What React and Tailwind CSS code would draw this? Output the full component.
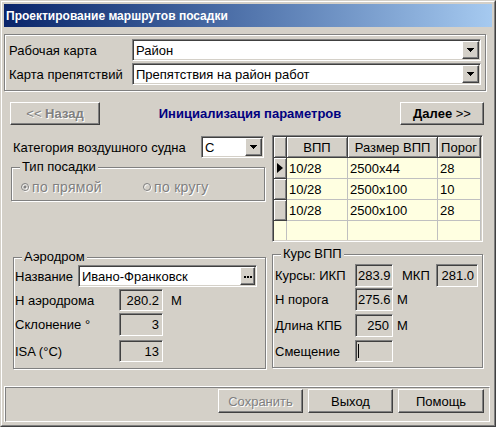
import React from "react";

const raised =
  "bg-[#d4d0c8] border border-t-white border-l-white border-b-[#404040] border-r-[#404040] shadow-[inset_-1px_-1px_0_#808080]";
const sunken =
  "border border-t-[#808080] border-l-[#808080] border-b-white border-r-white shadow-[inset_1px_1px_0_#404040,inset_-1px_-1px_0_#d4d0c8]";
const etched = "border border-[#808080] shadow-[inset_1px_1px_0_#fff,1px_1px_0_#fff]";
const dis = "text-[#808080] [text-shadow:1px_1px_0_#fff]";

function Arrow() {
  return (
    <svg width="7" height="4" viewBox="0 0 7 4" className="block">
      <path d="M0 0h7v1H0zM1 1h5v1H1zM2 2h3v1H2zM3 3h1v1H3z" fill="#000" />
    </svg>
  );
}

function Combo({ text, className }) {
  return (
    <div className={`flex items-stretch bg-white p-[1px] ${sunken} ${className}`}>
      <span className="flex-1 flex items-center pl-[2px] text-[13px] leading-none text-black">{text}</span>
      <div className={`w-[17px] flex items-center justify-center ${raised}`}>
        <Arrow />
      </div>
    </div>
  );
}

function Group({ title, className, children }) {
  return (
    <div className={`relative ${etched} ${className}`}>
      <span className="absolute left-[8px] top-[-9px] bg-[#d4d0c8] px-[2px] text-[13px] leading-[16px]">{title}</span>
      {children}
    </div>
  );
}

function Val({ children, className, align = "right" }) {
  return (
    <div
      className={`flex items-center p-[1px] bg-[#d4d0c8] ${sunken} ${
        align === "right" ? "justify-end pr-[3px]" : "justify-start pl-[2px]"
      } ${className}`}
    >
      <span className="text-[13px] leading-none">{children}</span>
    </div>
  );
}

function Radio({ checked }) {
  return (
    <svg width="9" height="9" viewBox="0 0 9 9" className="block">
      <circle cx="5" cy="5" r="3.5" fill="none" stroke="#fff" strokeWidth="1" />
      <circle cx="4" cy="4" r="3.5" fill="none" stroke="#808080" strokeWidth="1" />
      {checked && <circle cx="5" cy="5" r="1.5" fill="#fff" />}
      {checked && <circle cx="4" cy="4" r="1.5" fill="#808080" />}
    </svg>
  );
}

const hdr =
  "bg-[#d4d0c8] border-r border-b border-[#404040] shadow-[inset_1px_1px_0_#fff,inset_-1px_-1px_0_#808080]";
const cell = "border-r border-b border-[#c0c0c0] flex items-center pl-[2px] text-[13px] leading-none";

const rows = [
  ["10/28", "2500x44", "28"],
  ["10/28", "2500x100", "10"],
  ["10/28", "2500x100", "28"],
];

function Grid() {
  return (
    <div className={`mt-[10px] h-[107px] p-[1px] bg-[#ffffe1] flex flex-col overflow-hidden ${sunken}`}>
      <div className="h-[21px] flex shrink-0">
        <div className={`w-[13px] ${hdr}`} />
        <div className={`w-[61px] flex items-center justify-center text-[13px] leading-none ${hdr}`}>ВПП</div>
        <div className={`w-[90px] flex items-center justify-center text-[13px] leading-none ${hdr}`}>Размер ВПП</div>
        <div className={`flex-1 flex items-center justify-center text-[13px] leading-none ${hdr}`}>Порог</div>
      </div>
      {rows.map((r, i) => (
        <div key={i} className="h-[21px] flex shrink-0">
          <div className={`w-[13px] flex items-center pl-[3px] ${hdr}`}>
            {i === 0 && (
              <svg width="6" height="10" viewBox="0 0 6 10" className="block">
                <polygon points="0,0 6,5 0,10" fill="#000" />
              </svg>
            )}
          </div>
          <div className={`w-[61px] ${cell}`}>{r[0]}</div>
          <div className={`w-[90px] ${cell}`}>{r[1]}</div>
          <div className={`flex-1 ${cell}`}>{r[2]}</div>
        </div>
      ))}
      <div className="flex-1 flex">
        <div className="w-[13px] border-r border-[#c0c0c0]" />
        <div className="w-[61px] border-r border-[#c0c0c0]" />
        <div className="w-[90px] border-r border-[#c0c0c0]" />
        <div className="flex-1 border-r border-[#c0c0c0]" />
      </div>
    </div>
  );
}

export default function App() {
  return (
    <div className="w-[496px] h-[427px] border border-t-[#d4d0c8] border-l-[#d4d0c8] border-b-[#404040] border-r-[#404040] [font-family:'Liberation_Sans',Arial,sans-serif] text-black">
      <div className="w-full h-full border border-t-white border-l-white border-b-[#808080] border-r-[#808080] bg-[#d4d0c8] p-[2px] flex flex-col">
        {/* Title bar */}
        <div className="h-[23px] shrink-0 flex items-center pl-[2px] bg-linear-to-r from-[#0a246a] to-[#a6caf0] text-white font-bold text-[12px] leading-none">
          Проектирование маршрутов посадки
        </div>

        {/* Top group */}
        <div className={`mt-[7px] w-[482px] h-[57px] shrink-0 pt-[4px] pl-[4px] flex flex-col gap-[2px] ${etched}`}>
          <div className="h-[22px] flex items-center">
            <span className="w-[123px] text-[13px] leading-none">Рабочая карта</span>
            <Combo text="Район" className="w-[349px] h-[22px]" />
          </div>
          <div className="h-[22px] flex items-center">
            <span className="w-[123px] text-[13px] leading-none">Карта препятствий</span>
            <Combo text="Препятствия на район работ" className="w-[349px] h-[22px]" />
          </div>
        </div>

        {/* Nav row */}
        <div className="mt-[11px] h-[23px] shrink-0 flex items-center">
          <div className={`ml-[6px] w-[90px] h-[23px] flex items-center justify-center text-[13px] leading-none ${raised} ${dis}`}>
            <span>&lt;&lt;&nbsp;</span>
            <span className="font-bold">Назад</span>
          </div>
          <div className="flex-1 text-center font-bold text-[13px] leading-none text-[#000080]">Инициализация параметров</div>
          <div className={`mr-[8px] w-[84px] h-[23px] flex items-center justify-center text-[13px] leading-none ${raised}`}>
            <span className="font-bold">Далее</span>
            <span>&nbsp;&gt;&gt;</span>
          </div>
        </div>

        {/* Middle */}
        <div className="flex-1 flex">
          {/* Left column */}
          <div className="w-[262px] flex flex-col">
            <div className="mt-[11px] h-[22px] flex items-center">
              <span className="pl-[9px] text-[13px] leading-none">Категория воздушного судна</span>
              <Combo text="С" className="ml-auto mr-[2px] w-[63px] h-[22px]" />
            </div>
            <Group title="Тип посадки" className="mt-[9px] ml-[7px] w-[254px] h-[34px]">
              <div className="pt-[12px] pl-[9px] flex items-center">
                <div className={`w-[122px] flex items-center gap-[2px] text-[14px] tracking-[0.3px] leading-none ${dis}`}>
                  <Radio checked />
                  <span>по прямой</span>
                </div>
                <div className={`flex items-center gap-[2px] text-[14px] tracking-[0.3px] leading-none ${dis}`}>
                  <Radio />
                  <span>по кругу</span>
                </div>
              </div>
            </Group>
            <Group title="Аэродром" className="mt-[56px] ml-[9px] w-[253px] h-[112px]">
              <div className="flex flex-col pl-[1px]">
                <div className="mt-[7px] h-[22px] flex items-center">
                  <span className="w-[63px] text-[13px] leading-none">Название</span>
                  <div className={`w-[179px] h-[22px] p-[1px] bg-white flex items-stretch ${sunken}`}>
                    <span className="flex-1 flex items-center pl-[2px] text-[13px] leading-none">Ивано-Франковск</span>
                    <div className={`w-[15px] flex items-center justify-center pt-[2px] gap-[1px] ${raised}`}>
                      <span className="w-[2px] h-[2px] bg-black" />
                      <span className="w-[2px] h-[2px] bg-black" />
                      <span className="w-[2px] h-[2px] bg-black" />
                    </div>
                  </div>
                </div>
                <div className="mt-[2px] h-[22px] flex items-center">
                  <span className="w-[104px] text-[13px] leading-none">Н аэродрома</span>
                  <Val className="w-[44px] h-[22px]">280.2</Val>
                  <span className="ml-[8px] text-[13px] leading-none">М</span>
                </div>
                <div className="mt-[2px] h-[23px] flex items-center">
                  <span className="w-[104px] text-[13px] leading-none">Склонение °</span>
                  <Val className="w-[44px] h-[23px]">3</Val>
                </div>
                <div className="mt-[4px] h-[22px] flex items-center">
                  <span className="w-[104px] text-[13px] leading-none">ISA (°C)</span>
                  <Val className="w-[44px] h-[22px]">13</Val>
                </div>
              </div>
            </Group>
          </div>

          {/* Right column */}
          <div className="ml-[6px] w-[211px] flex flex-col">
            <Grid />
            <Group title="Курс ВПП" className="mt-[12px] h-[114px]">
              <div className="flex flex-col pl-[2px]">
                <div className="mt-[9px] h-[23px] flex items-center">
                  <span className="w-[80px] text-[13px] leading-none">Курсы: ИКП</span>
                  <Val className="w-[38px] h-[23px]" align="left">283.9</Val>
                  <span className="ml-[9px] w-[34px] text-[13px] leading-none">МКП</span>
                  <Val className="w-[42px] h-[23px]">281.0</Val>
                </div>
                <div className="mt-[1px] h-[23px] flex items-center">
                  <span className="w-[80px] text-[13px] leading-none">Н порога</span>
                  <Val className="w-[38px] h-[23px]" align="left">275.6</Val>
                  <span className="ml-[4px] text-[13px] leading-none">М</span>
                </div>
                <div className="mt-[3px] h-[23px] flex items-center">
                  <span className="w-[80px] text-[13px] leading-none">Длина КПБ</span>
                  <Val className="w-[38px] h-[23px]">250</Val>
                  <span className="ml-[4px] text-[13px] leading-none">М</span>
                </div>
                <div className="mt-[3px] h-[22px] flex items-center">
                  <span className="w-[80px] text-[13px] leading-none">Смещение</span>
                  <div className={`w-[38px] h-[22px] p-[1px] bg-[#d4d0c8] flex items-stretch pl-[2px] py-[3px] ${sunken}`}>
                    <span className="w-[1px] bg-black" />
                  </div>
                </div>
              </div>
            </Group>
          </div>
        </div>

        {/* Bottom panel */}
        <div className="mb-[1px] w-[486px] h-[36px] shrink-0 border-t border-l border-white">
          <div className="w-full h-full border border-t-[#808080] border-l-[#808080] border-b-white border-r-white flex items-start justify-end pt-[1px] pr-[5px] gap-[5px]">
            <div className={`w-[85px] h-[24px] flex items-center justify-center text-[13px] leading-none ${raised} ${dis}`}>Сохранить</div>
            <div className={`w-[85px] h-[24px] flex items-center justify-center text-[13px] leading-none ${raised}`}>Выход</div>
            <div className={`w-[86px] h-[24px] flex items-center justify-center text-[13px] leading-none ${raised}`}>Помощь</div>
          </div>
        </div>
      </div>
    </div>
  );
}
